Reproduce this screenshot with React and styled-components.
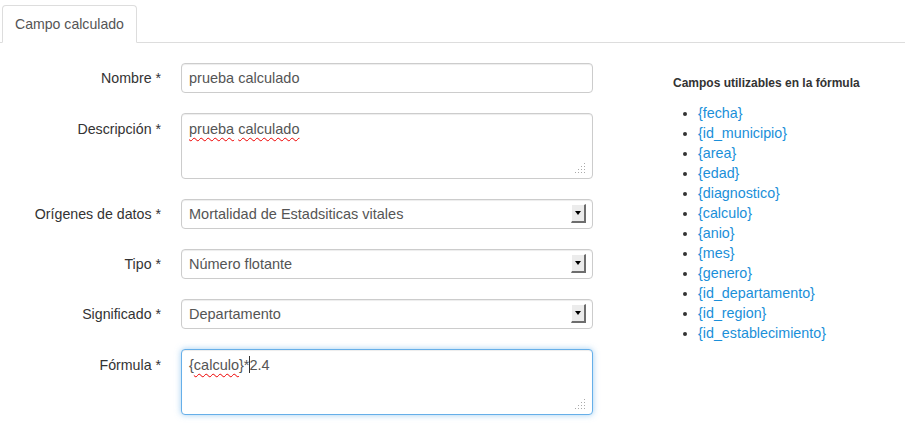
import React from "react";
import styled, { createGlobalStyle } from "styled-components";

const Global = createGlobalStyle`
  html, body { margin: 0; padding: 0; background: #fff; }
  body { font-family: "Liberation Sans", Arial, sans-serif; font-size: 14px; color: #333; }
`;

const Page = styled.div`
  width: 905px;
  height: 444px;
  overflow: hidden;
  padding-top: 5px;
  box-sizing: border-box;
`;

const TabBar = styled.div`
  display: flex;
  padding-left: 2px;
  border-bottom: 1px solid #ddd;
`;

const Tab = styled.div`
  height: 38px;
  box-sizing: border-box;
  padding: 0 12px;
  display: flex;
  align-items: center;
  border: 1px solid #ddd;
  border-bottom-color: transparent;
  border-radius: 4px 4px 0 0;
  margin-bottom: -1px;
  background: #fff;
  color: #555;
  font-size: 14.1px;
`;

const Body = styled.div`
  display: flex;
  padding-top: 20px;
`;

const Form = styled.div`
  display: grid;
  grid-template-columns: 161px 412px;
  column-gap: 20px;
  row-gap: 20px;
  width: 593px;
`;

const Label = styled.label`
  text-align: right;
  font-size: 14.2px;
  color: #333;
  line-height: 20px;
  padding-top: ${(p) => (p.$top ? "6px" : "5px")};
`;

const Field = styled.div`
  position: relative;
  height: ${(p) => (p.$tall ? "66px" : "30px")};
  box-sizing: border-box;
  border: 1px solid ${(p) => (p.$focus ? "#66afe9" : "#ccc")};
  border-radius: 4px;
  background: #fff;
  box-shadow: ${(p) =>
    p.$focus
      ? "inset 0 1px 1px rgba(0,0,0,.075), 0 0 6px rgba(102,175,233,.6)"
      : "inset 0 1px 1px rgba(0,0,0,.075)"};
  padding: ${(p) => (p.$tall ? "6px 7px" : "0 7px")};
  display: flex;
  align-items: ${(p) => (p.$tall ? "flex-start" : "center")};
  font-size: 14.5px;
  color: #555;
  line-height: 18px;
`;

const Squiggle = styled.span`
  text-decoration: underline wavy #e00;
  text-decoration-thickness: 1px;
  text-underline-offset: 3px;
`;

const Caret = styled.span`
  display: inline-block;
  width: 1px;
  height: 17px;
  background: #333;
  vertical-align: -3px;
  margin: 0 -1px 0 0;
`;

const ArrowBox = styled.span`
  position: absolute;
  right: 6px;
  top: 4px;
  width: 15px;
  height: 19px;
  box-sizing: border-box;
  background: #ececec;
  border-top: 1px solid #fff;
  border-left: 1px solid #fff;
  border-right: 2px solid #6e6e6e;
  border-bottom: 2px solid #6e6e6e;
  display: flex;
  align-items: center;
  justify-content: center;
  &::after {
    content: "";
    border-left: 3px solid transparent;
    border-right: 3px solid transparent;
    border-top: 4px solid #000;
  }
`;

const Grip = styled.svg`
  position: absolute;
  right: 6px;
  bottom: 4px;
`;

const Side = styled.div`
  margin-left: 80px;
  padding-top: 12px;
`;

const Heading = styled.div`
  font-weight: bold;
  font-size: 12px;
  color: #333;
  line-height: 16px;
`;

const List = styled.ul`
  margin: 12px 0 0;
  padding-left: 25px;
  list-style: disc;
  li {
    line-height: 20px;
    font-size: 14.3px;
    color: #333;
  }
`;

const Link = styled.a`
  color: #1a8fd9;
  text-decoration: none;
`;

const ResizeGrip = () => (
  <Grip width="12" height="12" viewBox="0 0 12 12">
    {[
      [10, 1], [10, 4], [7, 4], [10, 7], [7, 7], [4, 7], [10, 10], [7, 10], [4, 10], [1, 10],
    ].map(([x, y], i) => (
      <rect key={i} x={x} y={y} width="1" height="1" fill="#aaa" />
    ))}
  </Grip>
);

const campos = [
  "{fecha}",
  "{id_municipio}",
  "{area}",
  "{edad}",
  "{diagnostico}",
  "{calculo}",
  "{anio}",
  "{mes}",
  "{genero}",
  "{id_departamento}",
  "{id_region}",
  "{id_establecimiento}",
];

export default function App() {
  return (
    <Page>
      <Global />
      <TabBar>
        <Tab>Campo calculado</Tab>
      </TabBar>
      <Body>
        <Form>
          <Label>Nombre *</Label>
          <Field>prueba calculado</Field>

          <Label $top>Descripción *</Label>
          <Field $tall>
            <span>
              <Squiggle>prueba</Squiggle> <Squiggle>calculado</Squiggle>
            </span>
            <ResizeGrip />
          </Field>

          <Label>Orígenes de datos *</Label>
          <Field>
            Mortalidad de Estadsiticas vitales
            <ArrowBox />
          </Field>

          <Label>Tipo *</Label>
          <Field>
            Número flotante
            <ArrowBox />
          </Field>

          <Label>Significado *</Label>
          <Field>
            Departamento
            <ArrowBox />
          </Field>

          <Label $top>Fórmula *</Label>
          <Field $tall $focus>
            <span>
              {"{"}
              <Squiggle>calculo</Squiggle>
              {"}*"}
              <Caret />
              2.4
            </span>
            <ResizeGrip />
          </Field>
        </Form>
        <Side>
          <Heading>Campos utilizables en la fórmula</Heading>
          <List>
            {campos.map((c) => (
              <li key={c}>
                <Link href="#">{c}</Link>
              </li>
            ))}
          </List>
        </Side>
      </Body>
    </Page>
  );
}
